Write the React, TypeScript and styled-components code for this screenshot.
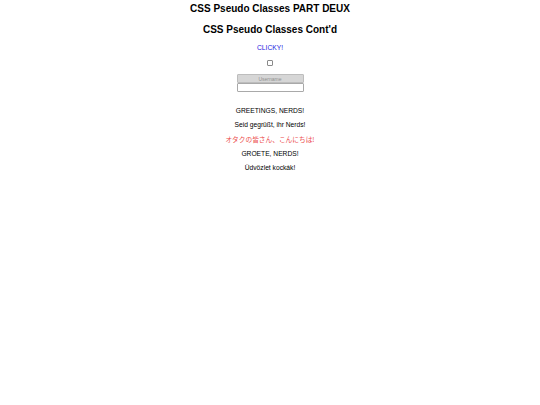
import styled, { createGlobalStyle } from "styled-components";

const GlobalStyle = createGlobalStyle`
    html, body {
        margin: 0;
        padding: 0;
        background: #fff;
    }
    body {
        font-family: "Liberation Sans", Arial, sans-serif;
        color: #000;
    }
`;

const StyledPage = styled.main`
    display: flex;
    flex-direction: column;
    align-items: center;
    width: 540px;
    min-height: 405px;
`;

const StyledTitle = styled.h1<{ $top?: number }>`
    margin: ${({ $top }) => $top ?? 0}px 0 0;
    font-size: 10px;
    line-height: 18px;
    font-weight: bold;
`;

const StyledLink = styled.a`
    margin-top: 4px;
    font-size: 6.7px;
    line-height: 10px;
    color: #2222e0;
    text-decoration: none;
    cursor: pointer;
`;

const StyledCheckbox = styled.input`
    appearance: none;
    margin: 7px 0 0;
    width: 6px;
    height: 6px;
    border: 1px solid #8a8a8a;
    border-radius: 1px;
    background: #fff;
    box-sizing: border-box;
`;

const StyledInputs = styled.div`
    display: flex;
    flex-direction: column;
    margin-top: 8px;
`;

const StyledInput = styled.input<{ $disabled?: boolean }>`
    box-sizing: border-box;
    width: 67px;
    height: 9px;
    padding: 0 2px;
    border: 1px solid ${({ $disabled }) => ($disabled ? "#bdbdbd" : "#a9a9a9")};
    border-radius: 1px;
    background: ${({ $disabled }) => ($disabled ? "#d6d6d6" : "#fff")};
    font-family: "Liberation Sans", Arial, sans-serif;
    font-size: 5px;
    text-align: center;
    outline: none;
    &::placeholder {
        color: #8f8f8f;
    }
`;

const StyledGreetings = styled.div`
    display: flex;
    flex-direction: column;
    align-items: center;
    margin-top: 12px;
`;

const StyledLine = styled.p<{ $lang?: "ja" }>`
    margin: 0;
    font-size: 6.7px;
    line-height: 14.2px;
    color: ${({ $lang }) => ($lang === "ja" ? "#ec4b4b" : "#000")};
    font-family: ${({ $lang }) =>
        $lang === "ja" ? `"Noto Sans CJK JP", "Liberation Sans", sans-serif` : `"Liberation Sans", Arial, sans-serif`};
`;

const greetings: { text: string; lang?: "ja" }[] = [
    { text: "GREETINGS, NERDS!" },
    { text: "Seid gegrüßt, ihr Nerds!" },
    { text: "オタクの皆さん、こんにちは!", lang: "ja" },
    { text: "GROETE, NERDS!" },
    { text: "Üdvözlet kockák!" },
];

function App() {
    return (
        <>
            <GlobalStyle />
            <StyledPage>
                <StyledTitle>CSS Pseudo Classes PART DEUX</StyledTitle>
                <StyledTitle as="h2" $top={3}>
                    CSS Pseudo Classes Cont'd
                </StyledTitle>
                <StyledLink>CLICKY!</StyledLink>
                <StyledCheckbox type="checkbox" />
                <StyledInputs>
                    <StyledInput $disabled disabled placeholder="Username" />
                    <StyledInput />
                </StyledInputs>
                <StyledGreetings>
                    {greetings.map((g) => (
                        <StyledLine key={g.text} $lang={g.lang}>
                            {g.text}
                        </StyledLine>
                    ))}
                </StyledGreetings>
            </StyledPage>
        </>
    );
}

export default App;
